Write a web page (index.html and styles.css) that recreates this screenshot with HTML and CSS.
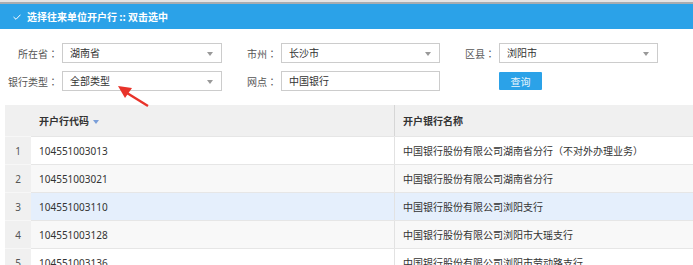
FILE: index.html
```html
<!DOCTYPE html>
<html lang="zh-CN">
<head>
  <meta charset="UTF-8">
  <title>选择往来单位开户行</title>
  <link rel="stylesheet" href="styles.css">
</head>
<body>
  <div class="top-strip"></div>
  <div class="dialog-title">
    <svg class="check" width="8" height="6" viewBox="0 0 8 6"><polyline points="0.5,3 3,5.3 7.5,0.7" fill="none" stroke="#fff" stroke-width="1"/></svg>
    <span>选择往来单位开户行 :: 双击选中</span>
  </div>

  <div class="search-form">
    <label class="lbl" lang="zh-TW">所在省：</label>
    <div class="select">湖南省<i class="caret"></i></div>
    <label class="lbl" lang="zh-TW">市州：</label>
    <div class="select">长沙市<i class="caret"></i></div>
    <label class="lbl" lang="zh-TW">区县：</label>
    <div class="select">浏阳市<i class="caret"></i></div>

    <label class="lbl" lang="zh-TW">银行类型：</label>
    <div class="select">全部类型<i class="caret"></i></div>
    <label class="lbl" lang="zh-TW">网点：</label>
    <div class="input">中国银行</div>
    <span></span>
    <div><button class="search-btn">查询</button></div>
  </div>

  <!-- annotation arrow -->
  <svg class="red-arrow" width="40" height="26" viewBox="0 0 40 26">
    <line x1="33" y1="22" x2="12" y2="9" stroke="#e8332a" stroke-width="2.4"/>
    <polygon points="3,2 17,4 10,14" fill="#e8332a"/>
  </svg>

  <div class="grid-wrap">
    <table class="grid">
      <thead>
        <tr>
          <th class="rn"></th>
          <th class="c1">开户行代码<i class="sort"></i></th>
          <th class="c2">开户银行名称</th>
        </tr>
      </thead>
      <tbody>
        <tr>
          <td class="rn">1</td><td class="code">104551003013</td><td>中国银行股份有限公司湖南省分行<span lang="zh-TW">（不对外办理业务）</span></td>
        </tr>
        <tr class="alt">
          <td class="rn">2</td><td class="code">104551003021</td><td>中国银行股份有限公司湖南省分行</td>
        </tr>
        <tr class="selected">
          <td class="rn">3</td><td class="code">104551003110</td><td>中国银行股份有限公司浏阳支行</td>
        </tr>
        <tr class="alt">
          <td class="rn">4</td><td class="code">104551003128</td><td>中国银行股份有限公司浏阳市大瑶支行</td>
        </tr>
        <tr>
          <td class="rn">5</td><td class="code">104551003136</td><td>中国银行股份有限公司浏阳市劳动路支行</td>
        </tr>
      </tbody>
    </table>
  </div>
</body>
</html>
```

FILE: styles.css
```css
body {
  margin: 0;
  font-family: "Noto Sans CJK SC", sans-serif;
  font-size: 10px;
  color: #333;
  background: #fff;
  overflow: hidden;
  position: relative;
  text-spacing-trim: space-all;
}
.top-strip {
  height: 2px;
  background: #e4e4e4;
  border-bottom: 2px solid #a8acb0;
}
.dialog-title {
  height: 25px;
  background: #2ba2e8;
  color: #fff;
  font-weight: bold;
  display: flex;
  align-items: center;
  padding-left: 13px;
  gap: 6px;
}
.check { margin-top: 1px; }

.search-form {
  display: grid;
  grid-template-columns: 62px 160px 59px 159px 59px 159px;
  grid-auto-rows: 20px;
  row-gap: 8px;
  padding-top: 14px;
  align-items: center;
}
.lbl {
  text-align: right;
  padding-right: 4px;
  color: #555;
  white-space: nowrap;
  font-family: "Noto Sans CJK TC", "Noto Sans CJK SC", sans-serif;
}
.select, .input {
  height: 20px;
  box-sizing: border-box;
  border: 1px solid #ccc;
  background: #fff;
  padding-left: 7px;
  line-height: 18px;
  position: relative;
}
.caret {
  position: absolute;
  right: 8px;
  top: 8px;
  border-left: 3px solid transparent;
  border-right: 3px solid transparent;
  border-top: 4px solid #999;
}
.search-btn {
  width: 43px;
  height: 18px;
  padding: 0;
  border: none;
  border-radius: 1px;
  background: #2ba2e8;
  color: #eaf6fd;
  font-family: inherit;
  font-size: 10px;
  display: block;
}

.red-arrow {
  position: absolute;
  left: 115px;
  top: 84px;
}

.grid-wrap {
  margin-top: 14px;
  margin-left: 5px;
}
.grid {
  width: 740px;
  border-collapse: collapse;
  table-layout: fixed;
}
.grid th, .grid td {
  text-align: left;
  padding: 0 0 0 8px;
  white-space: nowrap;
  border-bottom: 1px solid #e6e6e6;
}
.grid th {
  height: 31px;
  background: #f0f0f0;
  font-weight: bold;
  color: #333;
}
.grid td { height: 27px; }
.grid td span { font-family: "Noto Sans CJK TC", "Noto Sans CJK SC", sans-serif; }
.grid td.code { font-family: "Noto Sans", "Noto Sans CJK SC", sans-serif; }
.grid th.rn, .grid td.rn {
  width: 26px;
  padding: 0;
  text-align: center;
  background: #f0f0f0;
  color: #555;
  font-family: "Noto Sans", sans-serif;
  border-bottom-color: #f7f7f7;
}
.grid th.c1 { width: 355px; border-right: 1px solid #d6d6d6; }
.grid td:nth-child(2) { border-right: 1px solid #e2e2e2; }
.sort {
  display: inline-block;
  margin-left: 4px;
  vertical-align: middle;
  border-left: 3px solid transparent;
  border-right: 3px solid transparent;
  border-top: 4px solid #7b9fd9;
}
.grid tr.alt td { background: #f8f8f8; }
.grid tr.selected td { background: #e5effc; }
.grid tr.alt td.rn, .grid tr.selected td.rn { background: #f0f0f0; }
```
